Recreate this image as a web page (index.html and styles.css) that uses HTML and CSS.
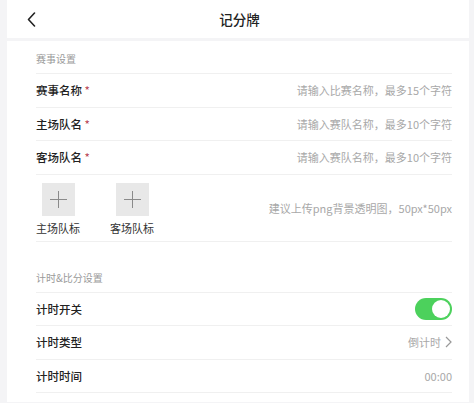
FILE: index.html
```html
<!DOCTYPE html>
<html lang="zh-CN">
<head>
    <meta charset="UTF-8">
    <meta name="viewport" content="width=device-width, initial-scale=1.0">
    <title>记分牌</title>
    <link rel="stylesheet" href="styles.css">
</head>
<body>

<div class="page">
    <div class="nav">
        <svg class="back" width="9" height="15" viewBox="0 0 9 15">
            <path d="M7.5 1 L1.5 7.5 L7.5 14" fill="none" stroke="#222" stroke-width="1.6" stroke-linecap="round" stroke-linejoin="round"/>
        </svg>
        <div class="nav-title">记分牌</div>
    </div>

    <div class="card">
        <div class="section-title">赛事设置</div>
        <div class="row">
            <div class="label">赛事名称 <span class="req">*</span></div>
            <div class="hint">请输入比赛名称，最多15个字符</div>
        </div>
        <div class="row">
            <div class="label">主场队名 <span class="req">*</span></div>
            <div class="hint">请输入赛队名称，最多10个字符</div>
        </div>
        <div class="row">
            <div class="label">客场队名 <span class="req">*</span></div>
            <div class="hint">请输入赛队名称，最多10个字符</div>
        </div>
        <div class="upload-row">
            <div class="uploads">
                <div class="upload">
                    <div class="upload-box">
                        <svg width="17" height="17" viewBox="0 0 17 17">
                            <path d="M8.5 0 V17 M0 8.5 H17" stroke="#8a8a8a" stroke-width="1"/>
                        </svg>
                    </div>
                    <div class="upload-label">主场队标</div>
                </div>
                <div class="upload">
                    <div class="upload-box">
                        <svg width="17" height="17" viewBox="0 0 17 17">
                            <path d="M8.5 0 V17 M0 8.5 H17" stroke="#8a8a8a" stroke-width="1"/>
                        </svg>
                    </div>
                    <div class="upload-label">客场队标</div>
                </div>
            </div>
            <div class="hint">建议上传png背景透明图，50px*50px</div>
        </div>

        <div class="section-title second">计时&amp;比分设置</div>
        <div class="row">
            <div class="label">计时开关</div>
            <div class="switch on"><span class="knob"></span></div>
        </div>
        <div class="row">
            <div class="label">计时类型</div>
            <div class="hint value">倒计时
                <svg width="7" height="12" viewBox="0 0 7 12">
                    <path d="M1 1 L6 6 L1 11" fill="none" stroke="#999" stroke-width="1.2"/>
                </svg>
            </div>
        </div>
        <div class="row">
            <div class="label">计时时间</div>
            <div class="hint">00:00</div>
        </div>
    </div>
</div>

</body>
</html>
```

FILE: styles.css
```css
body {
    margin: 0;
    background-color: #f4f4f6;
    font-family: "Noto Sans CJK SC", "Noto Sans", sans-serif;
    color: #222;
}

.page {
    margin-left: 7px;
    width: 462px;
}

.nav {
    height: 38px;
    background: #fff;
    display: flex;
    align-items: center;
    padding: 0 20px;
}

.back {
    display: block;
}

.nav-title {
    flex: 1;
    text-align: center;
    font-size: 13.5px;
    font-weight: 500;
    margin-left: 3px;
    padding-right: 9px;
}

.card {
    margin-top: 3px;
    background: #fff;
    padding: 0 17px 9px 29px;
}

.section-title {
    height: 33px;
    box-sizing: border-box;
    display: flex;
    align-items: flex-end;
    padding-bottom: 7px;
    font-size: 10px;
    line-height: 14px;
    color: #9a9a9a;
    border-bottom: 1px solid #f0f0f0;
}

.section-title.second {
    height: 51px;
    margin-top: 0;
}

.row {
    height: 33.5px;
    box-sizing: border-box;
    display: flex;
    align-items: center;
    justify-content: space-between;
    border-bottom: 1px solid #f0f0f0;
}

.label {
    font-size: 11.5px;
    font-weight: 500;
    color: #222;
}

.req {
    color: #b8404f;
    font-weight: 400;
}

.hint {
    font-size: 11px;
    color: #a8a8a8;
    display: flex;
    align-items: center;
}

.hint.value svg {
    margin-left: 4px;
}

.upload-row {
    height: 67px;
    box-sizing: border-box;
    display: flex;
    align-items: center;
    justify-content: space-between;
    border-bottom: 1px solid #f0f0f0;
}

.uploads {
    display: flex;
    gap: 30px;
    padding-top: 2px;
}

.upload {
    display: flex;
    flex-direction: column;
    align-items: center;
}

.upload-box {
    width: 33px;
    height: 33px;
    background: #e8e8e8;
    display: flex;
    align-items: center;
    justify-content: center;
}

.upload-label {
    margin-top: 5px;
    font-size: 11px;
    line-height: 14px;
    color: #333;
}

.switch {
    width: 37px;
    height: 22px;
    border-radius: 11px;
    background: #e5e5e5;
    position: relative;
}

.switch.on {
    background: #4cd15c;
}

.knob {
    position: absolute;
    top: 2px;
    right: 2px;
    width: 18px;
    height: 18px;
    border-radius: 50%;
    background: #fff;
}
```
